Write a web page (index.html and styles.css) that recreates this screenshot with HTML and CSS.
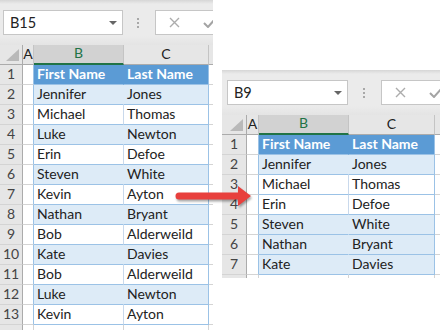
FILE: index.html
```html
<!DOCTYPE html>
<html>
<head>
    <title>Delete rows - before and after</title>
    <link rel="stylesheet" href="styles.css">
</head>
<body>
    <!-- Sheet before -->
    <div class="sheet sheet-left">
        <div class="formula-bar">
            <div class="name-box"><span>B15</span><span class="caret"></span></div>
            <div class="grip"><i></i><i></i><i></i></div>
            <div class="fx-box">
                <svg class="ico-x" width="11" height="11" viewBox="0 0 11 11"><path d="M1 1L10 10M10 1L1 10" stroke="#acacac" stroke-width="1.4"/></svg>
                <svg class="ico-ok" width="14" height="11" viewBox="0 0 14 11"><path d="M1 6L5 10L13 1" stroke="#a4a4a4" stroke-width="2" fill="none"/></svg>
            </div>
        </div>
        <div class="grid">
            <div class="row">
                <div class="corner"><span class="tri"></span></div>
                <div class="col-head">A</div>
                <div class="col-head sel">B</div>
                <div class="col-head">C</div>
                <div class="col-head"></div>
            </div>
            <div class="row thead"><div class="row-head">1</div><div class="cell"></div><div class="cell tb">First Name</div><div class="cell tc">Last Name</div><div class="cell"></div></div>
            <div class="row band"><div class="row-head">2</div><div class="cell"></div><div class="cell tb">Jennifer</div><div class="cell tc">Jones</div><div class="cell"></div></div>
            <div class="row plain"><div class="row-head">3</div><div class="cell"></div><div class="cell tb">Michael</div><div class="cell tc">Thomas</div><div class="cell"></div></div>
            <div class="row band"><div class="row-head">4</div><div class="cell"></div><div class="cell tb">Luke</div><div class="cell tc">Newton</div><div class="cell"></div></div>
            <div class="row plain"><div class="row-head">5</div><div class="cell"></div><div class="cell tb">Erin</div><div class="cell tc">Defoe</div><div class="cell"></div></div>
            <div class="row band"><div class="row-head">6</div><div class="cell"></div><div class="cell tb">Steven</div><div class="cell tc">White</div><div class="cell"></div></div>
            <div class="row plain"><div class="row-head">7</div><div class="cell"></div><div class="cell tb">Kevin</div><div class="cell tc">Ayton</div><div class="cell"></div></div>
            <div class="row band"><div class="row-head">8</div><div class="cell"></div><div class="cell tb">Nathan</div><div class="cell tc">Bryant</div><div class="cell"></div></div>
            <div class="row plain"><div class="row-head">9</div><div class="cell"></div><div class="cell tb">Bob</div><div class="cell tc">Alderweild</div><div class="cell"></div></div>
            <div class="row band"><div class="row-head">10</div><div class="cell"></div><div class="cell tb">Kate</div><div class="cell tc">Davies</div><div class="cell"></div></div>
            <div class="row plain"><div class="row-head">11</div><div class="cell"></div><div class="cell tb">Bob</div><div class="cell tc">Alderweild</div><div class="cell"></div></div>
            <div class="row band"><div class="row-head">12</div><div class="cell"></div><div class="cell tb">Luke</div><div class="cell tc">Newton</div><div class="cell"></div></div>
            <div class="row plain"><div class="row-head">13</div><div class="cell"></div><div class="cell tb">Kevin</div><div class="cell tc">Ayton</div><div class="cell"></div></div>
            <div class="row"><div class="row-head"></div><div class="cell"></div><div class="cell"></div><div class="cell"></div><div class="cell"></div></div>
        </div>
    </div>

    <!-- Sheet after -->
    <div class="sheet sheet-right">
        <div class="formula-bar">
            <div class="name-box"><span>B9</span><span class="caret"></span></div>
            <div class="grip"><i></i><i></i><i></i></div>
            <div class="fx-box">
                <svg class="ico-x" width="11" height="11" viewBox="0 0 11 11"><path d="M1 1L10 10M10 1L1 10" stroke="#acacac" stroke-width="1.4"/></svg>
                <svg class="ico-ok" width="14" height="11" viewBox="0 0 14 11"><path d="M1 6L5 10L13 1" stroke="#a4a4a4" stroke-width="2" fill="none"/></svg>
            </div>
        </div>
        <div class="grid">
            <div class="row">
                <div class="corner"><span class="tri"></span></div>
                <div class="col-head">A</div>
                <div class="col-head sel">B</div>
                <div class="col-head">C</div>
                <div class="col-head"></div>
            </div>
            <div class="row thead"><div class="row-head">1</div><div class="cell"></div><div class="cell tb">First Name</div><div class="cell tc">Last Name</div><div class="cell"></div></div>
            <div class="row band"><div class="row-head">2</div><div class="cell"></div><div class="cell tb">Jennifer</div><div class="cell tc">Jones</div><div class="cell"></div></div>
            <div class="row plain"><div class="row-head">3</div><div class="cell"></div><div class="cell tb">Michael</div><div class="cell tc">Thomas</div><div class="cell"></div></div>
            <div class="row plain"><div class="row-head">4</div><div class="cell"></div><div class="cell tb">Erin</div><div class="cell tc">Defoe</div><div class="cell"></div></div>
            <div class="row band"><div class="row-head">5</div><div class="cell"></div><div class="cell tb">Steven</div><div class="cell tc">White</div><div class="cell"></div></div>
            <div class="row band"><div class="row-head">6</div><div class="cell"></div><div class="cell tb">Nathan</div><div class="cell tc">Bryant</div><div class="cell"></div></div>
            <div class="row band"><div class="row-head">7</div><div class="cell"></div><div class="cell tb">Kate</div><div class="cell tc">Davies</div><div class="cell"></div></div>
            <div class="row"><div class="row-head"></div><div class="cell"></div><div class="cell"></div><div class="cell"></div><div class="cell"></div></div>
        </div>
    </div>

    <!-- Arrow between the two -->
    <svg class="arrow" width="84" height="34" viewBox="0 0 84 34">
        <path d="M7 12.5H66V6L79 16L66 26V19.5H7A3.25 3.25 0 0 1 7 12.5Z" fill="#e8403d"/>
    </svg>
</body>
</html>
```

FILE: styles.css
```css
body {
    margin: 0;
    width: 440px;
    height: 330px;
    position: relative;
    overflow: hidden;
    background: #fff;
    font-family: Lato, "Liberation Sans", sans-serif;
    font-size: 14px;
    color: #222;
}

/* Each screenshot is a window placed on the page */
.sheet {
    position: absolute;
    overflow: hidden;
    background: #fff;
}

.sheet-left {
    left: 0;
    top: 0;
    width: 213px;
    height: 330px;
}

.sheet-right {
    left: 222px;
    top: 70px;
    width: 218px;
    height: 208px;
}

/* Formula bar */
.formula-bar {
    height: 45px;
    box-sizing: border-box;
    padding-top: 10px;
    display: flex;
    align-items: flex-start;
    background: linear-gradient(#d6d6d6, #ebebeb 4px, #ebebeb 36px, #e4e4e4);
}

.formula-bar > * {
    flex-shrink: 0;
}

.name-box {
    width: 120px;
    height: 25px;
    box-sizing: border-box;
    margin-left: 3px;
    padding: 0 5px 0 6px;
    display: flex;
    align-items: center;
    justify-content: space-between;
    background: #fff;
    border: 1px solid #c6c6c6;
    font-size: 14.5px;
}

.sheet-right .name-box {
    margin-left: 5px;
    width: 121px;
}

.caret {
    border-top: 4px solid #666;
    border-left: 4px solid transparent;
    border-right: 4px solid transparent;
}

.grip {
    margin: 8px 0 0 14px;
    display: flex;
    flex-direction: column;
    gap: 2px;
}

.sheet-right .grip {
    margin-left: 15px;
}

.grip i {
    width: 2px;
    height: 2px;
    background: #a8a8a8;
}

.fx-box {
    margin-left: 16px;
    width: 120px;
    height: 25px;
    box-sizing: border-box;
    background: #fff;
    border: 1px solid #c6c6c6;
    display: flex;
    align-items: center;
    padding-left: 13px;
    gap: 23px;
}

.fx-box svg {
    flex-shrink: 0;
}

/* Sheet grid */
.grid {
    display: grid;
    grid-template-columns: 23px 11px 90px 85px 1fr;
    grid-auto-rows: 20px;
}

.sheet-right .grid {
    grid-template-columns: 25px 12px 90px 86px 1fr;
}

.row {
    display: contents;
}

.corner, .col-head, .row-head, .cell {
    box-sizing: border-box;
    border-right: 1px solid #d4d4d4;
    border-bottom: 1px solid #d4d4d4;
    display: flex;
    align-items: flex-end;
    white-space: nowrap;
    overflow: hidden;
}

.corner {
    background: #e6e6e6;
    border-right-color: #ababab;
    border-bottom-color: #ababab;
    justify-content: flex-end;
    padding: 0 3px 3px 0;
}

.tri {
    width: 0;
    height: 0;
    border-left: 13px solid transparent;
    border-bottom: 12px solid #b9b9b9;
}

.col-head {
    background: #e6e6e6;
    border-right-color: #c4c4c4;
    border-bottom-color: #ababab;
    justify-content: center;
    padding-bottom: 2px;
}

.col-head.sel {
    background: #d2d2d2;
    color: #217346;
    border-bottom: 2px solid #217346;
}

.row-head {
    background: #e6e6e6;
    border-right-color: #ababab;
    justify-content: center;
    padding-bottom: 2px;
    color: #444;
}

.cell {
    padding: 0 3px 2px;
}

/* Excel table style */
.thead .cell:nth-child(2),
.band .cell:nth-child(2),
.plain .cell:nth-child(2) {
    border-right-color: #9bc2e6;
}

.tb, .tc {
    border-bottom-color: #9bc2e6;
}

.tc {
    border-right-color: #9bc2e6;
}

.thead .tb, .thead .tc {
    background: #5b9bd5;
    color: #fff;
    font-weight: bold;
}

.thead .tb {
    border-right-color: #5b9bd5;
}

.band .tb, .band .tc {
    background: #ddebf7;
}

.band .tb {
    border-right-color: #ddebf7;
}

.plain .tb {
    border-right-color: #c9d9ec;
}

/* Red arrow over both windows */
.arrow {
    position: absolute;
    left: 172px;
    top: 180px;
    filter: drop-shadow(1px 2px 1px rgba(0, 0, 0, 0.35));
}
```
